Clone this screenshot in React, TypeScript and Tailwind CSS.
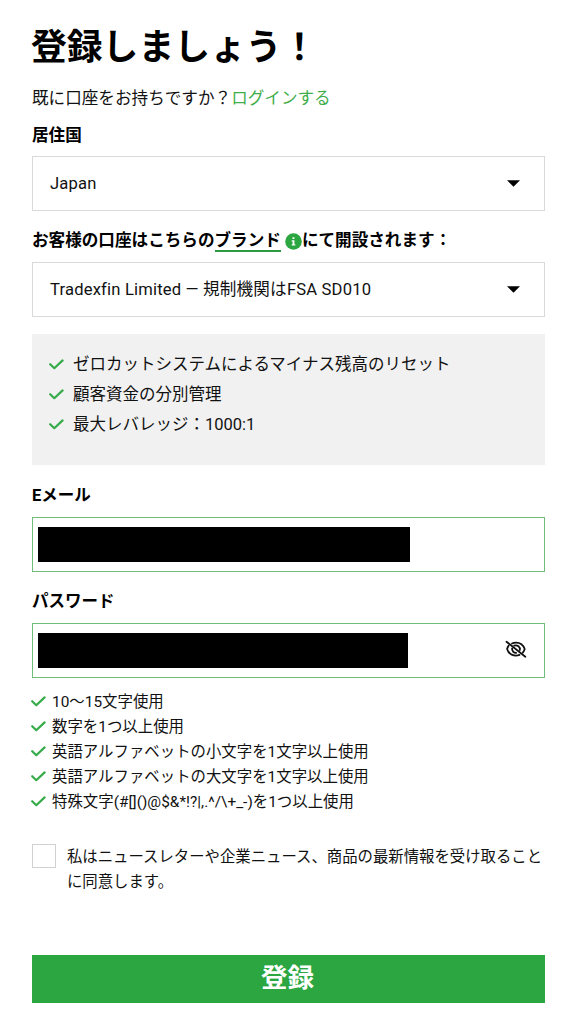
import React from 'react';

const benefits = [
  'ゼロカットシステムによるマイナス残高のリセット',
  '顧客資金の分別管理',
  '最大レバレッジ：1000:1',
];

const passwordRules = [
  '10〜15文字使用',
  '数字を1つ以上使用',
  '英語アルファベットの小文字を1文字以上使用',
  '英語アルファベットの大文字を1文字以上使用',
  '特殊文字(#[]()@$&*!?|,.^/\\+_-)を1つ以上使用',
];

function CheckIcon() {
  return (
    <svg className="h-[11px] w-[15px] shrink-0" viewBox="0 0 15 11" fill="none" stroke="#36ab4a">
      <path d="M1.2 5.2L5.3 9.2L13.6 1.4" strokeWidth={2.2} strokeLinecap="round" strokeLinejoin="round" />
    </svg>
  );
}

function InfoIcon() {
  return (
    <svg className="ml-1 h-[17px] w-[17px] shrink-0" viewBox="0 0 17 17">
      <circle cx="8.5" cy="8.5" r="8.3" fill="#2ba640" />
      <path d="M7.5 4.2h1.9v1.8H7.5zM6.7 7.2h2.7v4h.9v1.2H6.7v-1.2h.9V8.4h-.9z" fill="#fff" />
    </svg>
  );
}

function EyeOffIcon() {
  return (
    <svg className="h-[19px] w-[22px]" viewBox="0 0 22 19" fill="none" stroke="#111" strokeWidth={1.8} strokeLinecap="round">
      <path d="M1.5 1.7L20.3 16.7" />
      <path d="M7 3.5C8.2 2.9 9.6 2.6 11 2.6C15 2.6 18.3 5 19.7 9C19.3 10.5 18.6 11.7 17.8 12.6" />
      <path d="M3.7 5.6C2.9 6.6 2.4 7.7 2.1 9C3.4 13.1 6.9 15.6 11 15.6C12.3 15.6 13.5 15.3 14.5 14.9" />
      <path d="M9.2 5.6C12.4 4.5 15.5 7 14.8 10" />
      <path d="M7.1 8.3C6.8 10.8 8.7 12.9 11.2 12.8" />
    </svg>
  );
}

function SelectBox({ value }: { value: string }) {
  return (
    <button
      type="button"
      className="flex h-[55px] w-full items-center justify-between border border-[#d9d9d9] bg-white pl-[17px] pr-6 text-left"
    >
      <span className="pt-px tracking-[0.18px]">{value}</span>
      <svg className="h-[7px] w-[13px]" viewBox="0 0 13 7">
        <path d="M0 0.2h13L6.5 6.7z" fill="#000" />
      </svg>
    </button>
  );
}

export default function App() {
  return (
    <main className="h-[1024px] w-[580px] bg-white pl-8 pr-[35px] pt-[26px] font-['Roboto','Noto_Sans_CJK_JP',sans-serif] text-[16.6px] leading-6 text-[#111]" lang="ja">
      <h1 className="-ml-px h-11 whitespace-nowrap text-[35.8px] font-bold leading-[44px] text-black">登録しましょう！</h1>
      <p className="mt-[17px] h-6 whitespace-nowrap">
        既に口座をお持ちですか？<a className="text-[#3fae4b]">ログインする</a>
      </p>

      <div className="mt-[13px] h-6 font-bold text-black">居住国</div>
      <div className="mt-2">
        <SelectBox value="Japan" />
      </div>

      <div className="mt-[18px] flex h-6 items-center whitespace-nowrap font-bold text-black">
        <span>お客様の口座はこちらの</span>
        <span className="-mt-px h-[23px] border-b-2 border-[#2b9a40] leading-6">ブランド</span>
        <InfoIcon />
        <span>にて開設されます：</span>
      </div>
      <div className="mt-[9px]">
        <SelectBox value="Tradexfin Limited — 規制機関はFSA SD010" />
      </div>

      <ul className="mt-[17px] h-[131px] bg-[#f1f1f1] pl-[17px] pt-[15px] text-[16.5px]">
        {benefits.map((text) => (
          <li key={text} className="flex h-[30px] items-center gap-[9px] whitespace-nowrap">
            <CheckIcon />
            <span className="pt-px">{text}</span>
          </li>
        ))}
      </ul>

      <div className="mt-[19px] h-6 text-[16.5px] font-bold text-black">Eメール</div>
      <div className="mt-[9px] flex h-[55px] border border-[#70bd7b] pl-[5px] pt-[9px]">
        <div className="h-[35px] w-[372px] bg-black" />
      </div>

      <div className="mt-[18px] h-6 text-[16.5px] font-bold text-black">パスワード</div>
      <div className="mt-[9px] flex h-[55px] justify-between border border-[#70bd7b] pl-[5px] pr-[17px] pt-[9px]">
        <div className="h-[35px] w-[370px] bg-black" />
        <button type="button" className="mt-[7px] h-[19px]" aria-label="パスワードを表示">
          <EyeOffIcon />
        </button>
      </div>

      <ul className="-ml-px mt-[11px] text-[15.4px]">
        {passwordRules.map((text) => (
          <li key={text} className="flex h-[25px] items-center gap-1.5 whitespace-nowrap">
            <CheckIcon />
            <span className="tracking-[0.02px]">{text}</span>
          </li>
        ))}
      </ul>

      <label className="mt-[30px] flex text-[15.38px] leading-[25px]">
        <span className="h-6 w-6 shrink-0 border border-[#d2d2d2]" />
        <span className="ml-[11px] whitespace-nowrap pt-px">
          私はニュースレターや企業ニュース、商品の最新情報を受け取ること
          <br />
          に同意します。
        </span>
      </label>

      <button type="button" className="mt-[60px] block h-12 w-full bg-[#2ba640] pr-0.5 text-[26.5px] font-bold leading-[46px] text-white">
        <span className="block h-full">登録</span>
      </button>
    </main>
  );
}
